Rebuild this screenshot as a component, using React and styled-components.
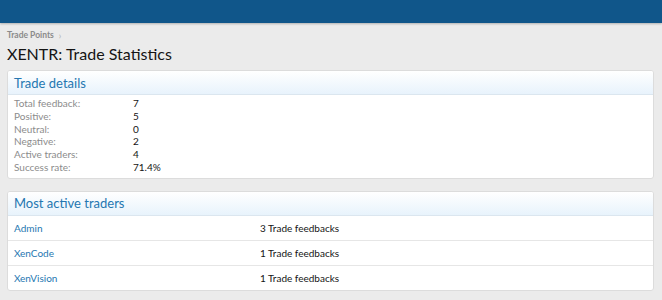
import React from "react";
import styled, { createGlobalStyle } from "styled-components";

const Global = createGlobalStyle`
  html, body { margin: 0; padding: 0; }
  body {
    background: #ebebeb;
    font-family: Lato, "Open Sans", sans-serif;
    color: #141414;
  }
`;

const TopBar = styled.header`
  height: 23px;
  background: #10568a;
  box-shadow: 0 1px 2px rgba(0, 0, 0, 0.25);
`;

const Main = styled.main`
  padding: 6px 8px 0 7px;
`;

const Breadcrumb = styled.div`
  display: flex;
  align-items: center;
  gap: 5px;
  font-size: 8.5px;
  font-weight: 700;
  color: #8a8a8a;
  height: 12px;
`;

const Chevron = styled.span`
  font-weight: 400;
  color: #b0b0b0;
  font-size: 9px;
`;

const Title = styled.h1`
  margin: 3px 0 0 0;
  font-size: 16px;
  font-weight: 400;
  line-height: 20px;
  color: #141414;
`;

const Panel = styled.section`
  background: #fff;
  border: 1px solid #dcdcdc;
  border-radius: 3px;
  margin-top: ${(p) => p.$mt}px;
  overflow: hidden;
`;

const PanelHeader = styled.h2`
  margin: 0;
  height: 23px;
  display: flex;
  align-items: center;
  padding: 0 6px;
  font-size: 13px;
  font-weight: 400;
  color: #2577b1;
  background: linear-gradient(to bottom, #ffffff, #e8f3fc);
  border-bottom: 1px solid #dbe6ef;
`;

const StatsBody = styled.dl`
  margin: 0;
  padding: 2px 6px 4px 6px;
  display: grid;
  grid-template-columns: 119px 1fr;
  font-size: 10px;
  line-height: 12.8px;
`;

const Label = styled.dt`
  color: #8c8c8c;
`;

const Value = styled.dd`
  margin: 0;
  color: #141414;
`;

const TraderRow = styled.div`
  display: grid;
  grid-template-columns: 246px 1fr;
  height: 24px;
  align-items: center;
  padding: 0 6px;
  font-size: 10px;
  border-top: ${(p) => (p.$first ? "none" : "1px solid #e6e6e6")};
`;

const TraderName = styled.a`
  color: #2577b1;
  text-decoration: none;
`;

const stats = [
  ["Total feedback:", "7"],
  ["Positive:", "5"],
  ["Neutral:", "0"],
  ["Negative:", "2"],
  ["Active traders:", "4"],
  ["Success rate:", "71.4%"],
];

const traders = [
  ["Admin", "3 Trade feedbacks"],
  ["XenCode", "1 Trade feedbacks"],
  ["XenVision", "1 Trade feedbacks"],
];

export default function App() {
  return (
    <>
      <Global />
      <TopBar />
      <Main>
        <Breadcrumb>
          Trade Points <Chevron>›</Chevron>
        </Breadcrumb>
        <Title>XENTR: Trade Statistics</Title>
        <Panel $mt={6}>
          <PanelHeader>Trade details</PanelHeader>
          <StatsBody>
            {stats.map(([l, v]) => (
              <React.Fragment key={l}>
                <Label>{l}</Label>
                <Value>{v}</Value>
              </React.Fragment>
            ))}
          </StatsBody>
        </Panel>
        <Panel $mt={12}>
          <PanelHeader>Most active traders</PanelHeader>
          {traders.map(([n, v], i) => (
            <TraderRow key={n} $first={i === 0}>
              <TraderName href="#">{n}</TraderName>
              <span>{v}</span>
            </TraderRow>
          ))}
        </Panel>
      </Main>
    </>
  );
}
